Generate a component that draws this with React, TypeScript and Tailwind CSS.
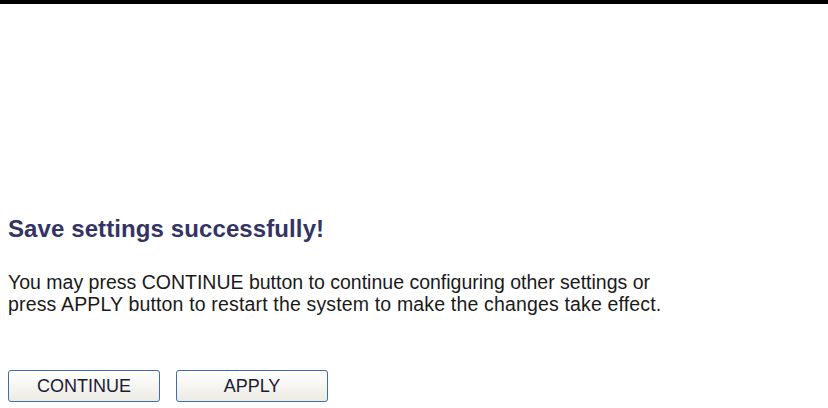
export default function App() {
  return (
    <div className="w-[828px] h-[408px] bg-white overflow-hidden" style={{ fontFamily: '"Liberation Sans", Arial, sans-serif' }}>
      <div className="h-[4px] bg-black" />
      <div className="pl-[8px] pt-[211px]">
        <h1 className="text-[24px] leading-[28px] font-bold tracking-[0.1px] text-[#333366]">Save settings successfully!</h1>
        <p className="mt-[28px] text-[19.5px] leading-[22px] text-[#1a1a1a] whitespace-nowrap">
          You may press CONTINUE button to continue configuring other settings or
          <br />
          <span className="tracking-[0.16px]">press APPLY button to restart the system to make the changes take effect.</span>
        </p>
        <div className="mt-[55px] flex gap-[16px]">
          <button className="w-[152px] h-[32px] rounded-[3px] border border-[#3f6ea8] bg-gradient-to-b from-white to-[#ecebe4] text-[18px] leading-none text-[#1a1a33]">
            CONTINUE
          </button>
          <button className="w-[152px] h-[32px] rounded-[3px] border border-[#3f6ea8] bg-gradient-to-b from-white to-[#ecebe4] text-[18px] leading-none text-[#1a1a33]">
            APPLY
          </button>
        </div>
      </div>
    </div>
  );
}
